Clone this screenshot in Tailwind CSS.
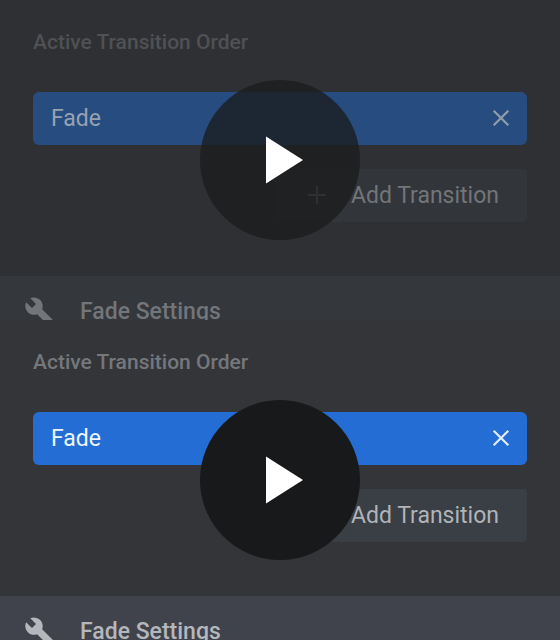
<!DOCTYPE html>
<html lang="en">
<head>
<meta charset="utf-8">
<meta name="viewport" content="width=device-width, initial-scale=1">
<title>Transitions</title>
<script src="https://cdn.jsdelivr.net/npm/@tailwindcss/browser@4"></script>
</head>
<body class="bg-[#2f3033] font-['Roboto','Liberation_Sans',sans-serif] font-medium">
<main class="grid h-screen grid-rows-2">

  <section class="relative overflow-hidden bg-[#2f3033]">
    <div class="flex flex-col px-[33px] pt-[30px] pb-[54px]">
      <h2 class="text-[21px] leading-6 text-[#4f5155]">Active Transition Order</h2>
      <div class="mt-[38px] flex h-[53px] items-center justify-between rounded-md bg-[#274d80] pr-4 pl-[18px]">
        <span class="text-[23px] leading-6 font-normal text-[#97a2b1]">Fade</span>
        <button type="button" aria-label="Remove Fade" class="text-[#929dac]">
          <svg class="size-5" viewBox="0 0 20 20" fill="none" stroke="currentColor" stroke-width="2.2"><path d="M2.7 1.7l14.6 14.6M17.3 1.7L2.7 16.3"/></svg>
        </button>
      </div>
      <button type="button" class="mt-6 flex h-[53px] items-center gap-6 self-end rounded bg-[#323539] pr-7 pl-8 text-[#727579]">
        <svg class="size-5" viewBox="0 0 20 20" fill="none" stroke="currentColor" stroke-width="2"><path d="M10 0v18M1 9h18"/></svg>
        <span class="text-[23px] leading-6 font-normal">Add Transition</span>
      </button>
    </div>
    <div class="flex items-start gap-6 bg-[#34373b] px-6 pt-5 pb-6 text-[#727579]">
      <svg class="h-8 w-8" viewBox="0 0 24 24" fill="currentColor"><path d="M22.7 19l-9.1-9.1c.9-2.3.4-5-1.5-6.9-2-2-5-2.4-7.4-1.3L9 6 6 9 1.6 4.7C.4 7.1.9 10.1 2.9 12.1c1.9 1.9 4.6 2.4 6.9 1.5l9.1 9.1c.4.4 1 .4 1.4 0l2.3-2.3c.5-.4.5-1.1.1-1.4z"/></svg>
      <h3 class="pt-1 text-[23px] leading-6">Fade Settings</h3>
    </div>
    <button type="button" aria-label="Play" class="absolute inset-0 m-auto size-40 rounded-full bg-[#1a1b1c]/77">
      <svg class="size-40" viewBox="0 0 160 160" fill="#fff"><path d="M66 56.500L103 80 66 103.500z"/></svg>
    </button>
  </section>

  <section class="relative overflow-hidden bg-[#343539]">
    <div class="flex flex-col px-[33px] pt-[30px] pb-[54px]">
      <h2 class="text-[21px] leading-6 text-[#74777b]">Active Transition Order</h2>
      <div class="mt-[38px] flex h-[53px] items-center justify-between rounded-md bg-[#246dd4] pr-4 pl-[18px]">
        <span class="text-[23px] leading-6 font-normal text-[#edf5ff]">Fade</span>
        <button type="button" aria-label="Remove Fade" class="text-[#e2eeff]">
          <svg class="size-5" viewBox="0 0 20 20" fill="none" stroke="currentColor" stroke-width="2.2"><path d="M2.7 1.7l14.6 14.6M17.3 1.7L2.7 16.3"/></svg>
        </button>
      </div>
      <button type="button" class="mt-6 flex h-[53px] items-center gap-6 self-end rounded bg-[#3a3e45] pr-7 pl-8 text-[#b0b4b9]">
        <svg class="size-5" viewBox="0 0 20 20" fill="none" stroke="currentColor" stroke-width="2"><path d="M10 0v18M1 9h18"/></svg>
        <span class="text-[23px] leading-6 font-normal">Add Transition</span>
      </button>
    </div>
    <div class="flex items-start gap-6 bg-[#40434b] px-6 pt-5 pb-6 text-[#b4b7bb]">
      <svg class="h-8 w-8" viewBox="0 0 24 24" fill="currentColor"><path d="M22.7 19l-9.1-9.1c.9-2.3.4-5-1.5-6.9-2-2-5-2.4-7.4-1.3L9 6 6 9 1.6 4.7C.4 7.1.9 10.1 2.9 12.1c1.9 1.9 4.6 2.4 6.9 1.5l9.1 9.1c.4.4 1 .4 1.4 0l2.3-2.3c.5-.4.5-1.1.1-1.4z"/></svg>
      <h3 class="pt-1 text-[23px] leading-6">Fade Settings</h3>
    </div>
    <button type="button" aria-label="Play" class="absolute inset-0 m-auto size-40 rounded-full bg-[#18191a]">
      <svg class="size-40" viewBox="0 0 160 160" fill="#fff"><path d="M66 56.500L103 80 66 103.500z"/></svg>
    </button>
  </section>

</main>
</body>
</html>
